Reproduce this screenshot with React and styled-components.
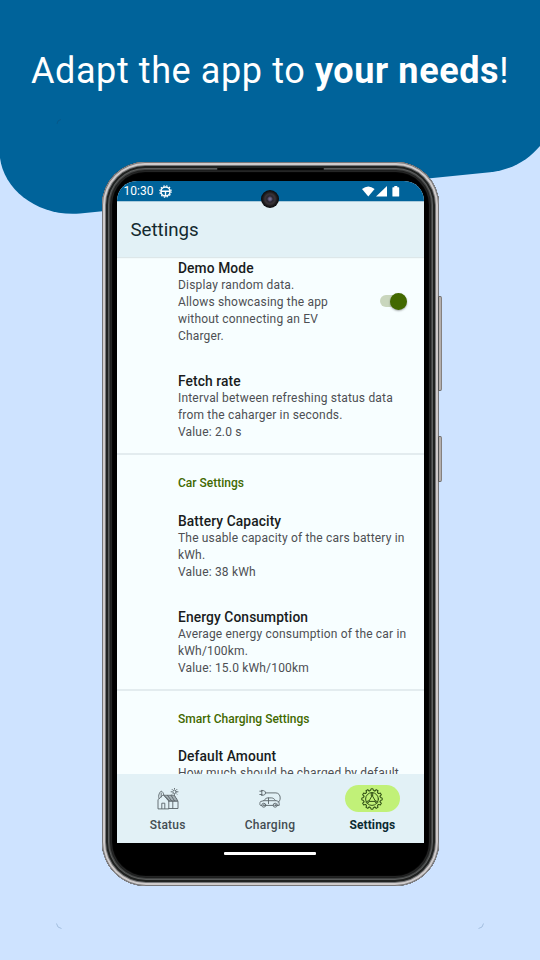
import React from 'react';
import styled, { createGlobalStyle } from 'styled-components';

const GlobalStyle = createGlobalStyle`
  * { box-sizing: border-box; }
  body { margin: 0; background: #cee3ff; font-family: Roboto, "Liberation Sans", sans-serif; }
`;

const Page = styled.main`
  position: relative;
  isolation: isolate;
  width: 540px;
  height: 960px;
  overflow: hidden;
  background: #cee3ff;
  display: flex;
  flex-direction: column;
  align-items: center;
`;

const Backdrop = styled.svg`
  position: absolute;
  inset: 0;
  z-index: -1;
`;

const Headline = styled.h1`
  margin: 0;
  height: 162px;
  padding-top: 46px;
  line-height: 50px;
  font-size: 36px;
  font-weight: 400;
  letter-spacing: ${(p) => p.$spacing}px;
  color: #fff;
  white-space: nowrap;
  b { font-weight: 700; }
`;

const Phone = styled.section`
  position: relative;
  width: 337px;
  height: 724px;
  padding: 19px 14px 0 15px;
  border-radius: 43px 43px 44px 44px;
  background: #000;
  box-shadow:
    inset 0 0 0 1px #77777a,
    inset 0 0 0 3px #cfcbcb,
    inset 0 0 0 4px #77787a,
    inset 0 0 0 6px #202221,
    inset 0 0 0 7px #5c5e5e,
    inset 0 0 0 8px #414343,
    inset 0 0 0 9px #1e1f1f,
    inset 0 0 1px 10px #292a2a;
`;

const SideButton = styled.span`
  position: absolute;
  left: 336px;
  top: ${(p) => p.$top}px;
  width: 4px;
  height: ${(p) => p.$length}px;
  border: 1px solid #6b6968;
  border-left-color: #555;
  border-right-color: #85817f;
  border-radius: 0 2px 2px 0;
  background: #b4afad;
`;

const Speaker = styled.span`
  position: absolute;
  left: 115px;
  top: 6px;
  width: 107px;
  height: 2px;
  border-radius: 1px;
  background: #080808;
`;

const Camera = styled.span`
  position: absolute;
  left: 159px;
  top: 28px;
  width: 18px;
  height: 18px;
  border-radius: 50%;
  background: radial-gradient(circle at 50% 50%, #6d6789 0 1px, #292631 3px, #3a3437 5px, #1c1b1d 7px, #080809 9px);
`;

const Screen = styled.div`
  width: 307px;
  height: 662px;
  display: flex;
  flex-direction: column;
  overflow: hidden;
  border-radius: 20px 20px 0 0;
  background: #f7feff;
`;

const StatusBar = styled.header`
  flex: 0 0 21px;
  display: flex;
  align-items: center;
  padding: 0 24px 0 7px;
  border-bottom: 1px solid #a9cbdc;
  background: #00639a;
  color: #fff;
  font-size: 12px;
  line-height: 20px;
`;

const Clock = styled.span`
  width: 35px;
`;

const StatusIcons = styled.span`
  display: flex;
  align-items: center;
  margin-left: auto;
`;

const Toolbar = styled.div`
  flex: 0 0 55px;
  min-height: 0;
  position: relative;
  padding: 0 14px;
  background: #e2f1f6;
  box-shadow: 0 1px 1px rgba(90, 110, 120, 0.16);
  color: #14292e;
  font-size: 18.7px;
  line-height: 56px;
`;

const List = styled.div`
  flex: 1;
  min-height: 0;
  overflow: hidden;
  padding-top: 3px;
`;

const Group = styled.section`
  border-bottom: 2px solid #e3ecef;
  padding-bottom: 12px;
`;

const Category = styled.h2`
  margin: 0;
  padding: 20px 0 20.5px 61.5px;
  font-size: 12px;
  line-height: 17px;
  font-weight: 500;
  color: #426900;
`;

const Item = styled.article`
  display: flex;
  align-items: center;
  padding: 0 17px 0 61.5px;
  & + & { margin-top: 28px; }
`;

const ItemText = styled.div`
  flex: 1;
  white-space: nowrap;
`;

const ItemTitle = styled.h3`
  margin: 0;
  font-size: 13.8px;
  line-height: 17px;
  font-weight: 500;
  letter-spacing: 0.1px;
  color: #191c1d;
`;

const ItemLine = styled.p`
  margin: 0;
  font-size: 12px;
  line-height: 17px;
  letter-spacing: 0.18px;
  color: #4d4f53;
`;

const Toggle = styled.span`
  display: flex;
  justify-content: flex-end;
  align-items: center;
  width: 27px;
  height: 12px;
  margin-top: -3px;
  border-radius: 6px;
  background: #c9d6bd;
  &::after {
    content: "";
    flex: 0 0 17px;
    height: 17px;
    border-radius: 50%;
    background: #426900;
    box-shadow: 0 1px 2px rgba(0, 0, 0, 0.35);
  }
`;

const BottomNav = styled.nav`
  flex: 0 0 69px;
  display: grid;
  grid-template-columns: repeat(3, 1fr);
  padding-top: 11px;
  background: #e2f1f6;
`;

const NavItem = styled.div`
  display: flex;
  flex-direction: column;
  align-items: center;
  gap: 5px;
  font-size: 12px;
  line-height: 17px;
  font-weight: ${(p) => (p.$active ? 700 : 500)};
  letter-spacing: ${(p) => (p.$active ? 0.1 : 0.25)}px;
  color: ${(p) => (p.$active ? '#0c2b32' : '#424c51')};
`;

const NavIcon = styled.span`
  display: flex;
  align-items: center;
  justify-content: center;
  width: 55px;
  height: 27px;
  border-radius: 14px;
  color: ${(p) => (p.$active ? '#2b4a12' : '#596368')};
  background: ${(p) => (p.$active ? '#c1f178' : 'transparent')};
`;

const HomeBar = styled.div`
  width: 92px;
  height: 3px;
  margin: 9px 0 0 107px;
  border-radius: 1px;
  background: #fff;
`;

const outline = { fill: 'none', stroke: 'currentColor', strokeLinecap: 'round', strokeLinejoin: 'round' };

function HouseIcon() {
  return (
    <svg width="22" height="22" viewBox="0 0 22 22" {...outline} strokeWidth="0.9">
      <path d="M1 20.5V11.8l5-5 5.8 5.2v8.5zM4.8 20.5v-5.3h3v5.3M11.8 20.5h9.2v-7.3h-9.2M15.800 13.300v7.200" />
      <path d="M7.5 7.3h9.8l3.5 5.5h-9zM8.8 9h9.4M10.3 11h9.4M10.5 7.3l4 5.5M14 7.3l3.5 5.5" />
      <path d="M2 10.5C.6 7.6 3.2 3.2 4.2 3.2c1.2 0 2.5 2.2 2.6 3.6M4.2 5v4" />
      <circle cx="17.5" cy="3.8" r="1.7" />
      <path d="M17.5.4v.6M17.5 6.6v.7M14.1 3.8h.6M20.3 3.8h.7M15.1 1.4l.4.4M19.5 5.8l.4.4M19.9 1.4l-.4.4M15.5 5.8l-.4.4" />
    </svg>
  );
}

function ChargingCarIcon() {
  return (
    <svg width="22" height="22" viewBox="0 0 22 22" {...outline} strokeWidth="0.9">
      <path d="M2.800 2.300V7.400M.8 3.200h2M.8 6.500h2M2.800 2.500c2.600-.2 3.600.8 3.700 2.400-.1 1.600-1.100 2.600-3.700 2.300M6.500 4.900h10.400c2.700 0 4.300 2.400 4.300 5 0 2.300-1 3.800-2.200 4.700" />
      <path d="M2.800 17.400H1.400c-.8-.4-.7-3.200.2-3.900l3.100-.8c1.700-2 2.700-2.800 4.200-2.800h3.600c1.800 0 2.900 1.300 4.200 2.700 2.600.4 3.400 1.200 3.500 3.100v1.700h-2M6.800 17.400h7.400M4.700 12.700h11.800M9.500 10v5.600" />
      <circle cx="4.8" cy="17.2" r="2" /><circle cx="16.2" cy="17.2" r="2" />
      <circle cx="4.8" cy="17.2" r=".5" /><circle cx="16.2" cy="17.2" r=".5" />
    </svg>
  );
}

function GearIcon() {
  const teeth = Array.from({ length: 12 }, (_, i) => i * 30);
  return (
    <svg width="22" height="22" viewBox="-11 -11 22 22" {...outline} strokeWidth="0.95">
      <circle r="6.4" />
      {teeth.map((a) => (
        <path key={a} transform={`rotate(${a})`} d="M-2.2-8.2L-1.3-8.5-1.1-10.2H1.1L1.3-8.5 2.2-8.2" />
      ))}
      <path d="M0-3.2L-3.2 2.4H3.2zM-.7-6.2V-3.4M.7-6.2V-3.4M-3.7 1.800l-2.200 1.300M-3 3l-2 1.400M3.700 1.800l2.200 1.300M3 3l2 1.400" />
    </svg>
  );
}

function WheelIcon() {
  return (
    <svg width="13" height="13" viewBox="0 0 13 13" fill="none" stroke="currentColor">
      <circle cx="6.5" cy="6.5" r="4.5" strokeWidth="1.5" />
      <circle cx="6.5" cy="6.5" r="5.6" strokeWidth="1.2" strokeDasharray="1.5 1.43" />
      <path d="M2 6.2h9M6.5 6.2V11" strokeWidth="1.4" />
    </svg>
  );
}

function SignalIcons() {
  return (
    <svg width="38" height="13" viewBox="0 0 38 13" fill="currentColor">
      <path d="M0 4.1Q6.3-1.1 12.6 4.1L6.3 11.5z" />
      <path d="M14 11.5H25V1.1z" />
      <path d="M31 2.2h1.3V1h3v1.2h1.3q.6 0 .6.6v8.1q0 .6-.6.6H31q-.6 0-.6-.6V2.8q0-.6.6-.6z" />
    </svg>
  );
}

const groups = [
  {
    items: [
      { title: 'Demo Mode', lines: ['Display random data.', 'Allows showcasing the app', 'without connecting an EV', 'Charger.'], toggle: true },
      { title: 'Fetch rate', lines: ['Interval between refreshing status data', 'from the caharger in seconds.', 'Value: 2.0 s'] },
    ],
  },
  {
    name: 'Car Settings',
    items: [
      { title: 'Battery Capacity', lines: ['The usable capacity of the cars battery in', 'kWh.', 'Value: 38 kWh'] },
      { title: 'Energy Consumption', lines: ['Average energy consumption of the car in', 'kWh/100km.', 'Value: 15.0 kWh/100km'] },
    ],
  },
  {
    name: 'Smart Charging Settings',
    items: [{ title: 'Default Amount', lines: ['How much should be charged by default'] }],
  },
];

const tabs = [
  { label: 'Status', Icon: HouseIcon },
  { label: 'Charging', Icon: ChargingCarIcon },
  { label: 'Settings', Icon: GearIcon, active: true },
];

export default function App() {
  return (
    <Page>
      <GlobalStyle />
      <Backdrop width="540" height="960" viewBox="0 0 540 960">
        <path fill="#00639a" d="M0 0H540V146C528 160 512 170 490 172.300L80 213.500C38 217 4 190 0 158Z" />
        <g fill="none" stroke="#9fbbdb" strokeWidth=".9">
          <path d="M56.500 923.500Q57 928 61.500 928.500M483.500 923.500Q483 928 478.500 928.500" />
          <path stroke="#075788" d="M57 124Q57 120 61 119.500" />
        </g>
      </Backdrop>
      <Headline $spacing={0.6}>Adapt the app to <b>your needs</b>!</Headline>
      <Phone>
        <SideButton $top={134} $length={95} />
        <SideButton $top={274} $length={46} />
        <Speaker />
        <Screen>
          <StatusBar>
            <Clock>10:30</Clock>
            <WheelIcon />
            <StatusIcons><SignalIcons /></StatusIcons>
          </StatusBar>
          <Toolbar>Settings</Toolbar>
          <List>
            {groups.map((group, i) => (
              <Group key={i}>
                {group.name && <Category>{group.name}</Category>}
                {group.items.map((item) => (
                  <Item key={item.title}>
                    <ItemText>
                      <ItemTitle>{item.title}</ItemTitle>
                      {item.lines.map((line) => <ItemLine key={line}>{line}</ItemLine>)}
                    </ItemText>
                    {item.toggle && <Toggle />}
                  </Item>
                ))}
              </Group>
            ))}
          </List>
          <BottomNav>
            {tabs.map(({ label, Icon, active }) => (
              <NavItem key={label} $active={active}>
                <NavIcon $active={active}><Icon /></NavIcon>
                {label}
              </NavItem>
            ))}
          </BottomNav>
        </Screen>
        <HomeBar />
        <Camera />
      </Phone>
    </Page>
  );
}
